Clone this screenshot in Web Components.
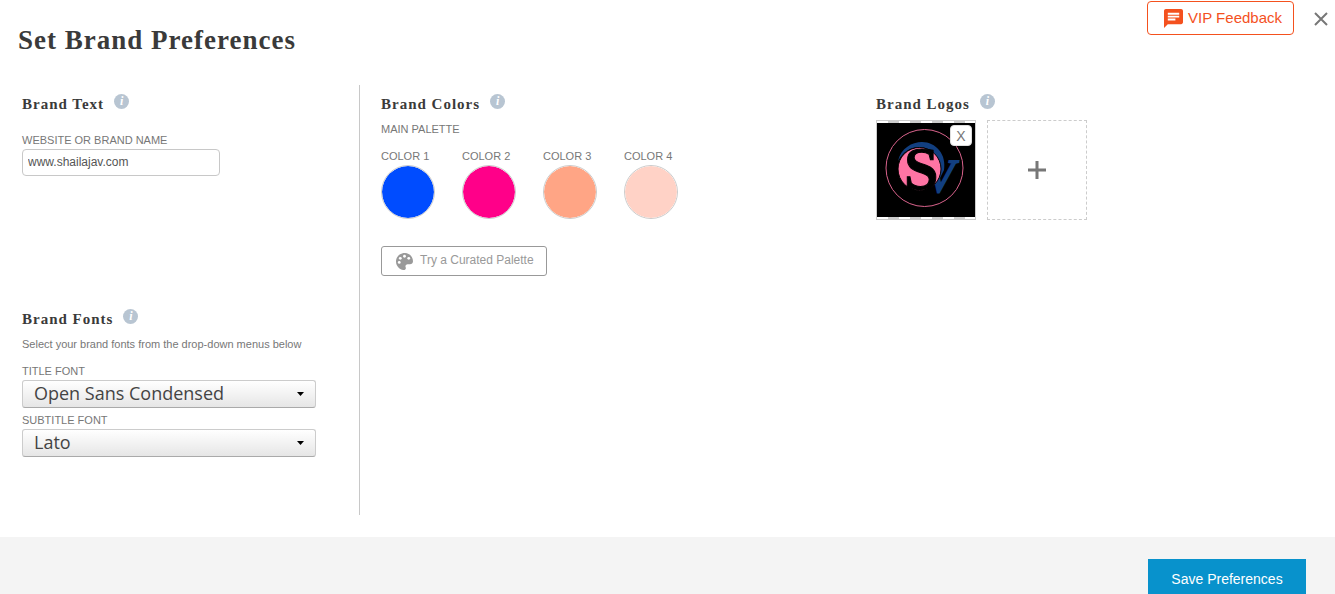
<!DOCTYPE html>
<html lang="en">
<head>
<meta charset="utf-8">
<title>Set Brand Preferences</title>
<style>
  html, body { margin: 0; }
  body { background: #fff; color: #777; font: 11px/14px "Liberation Sans", Arial, sans-serif; }
</style>
</head>
<body>
<brand-preferences>
  <page-header slot="header">Set Brand Preferences</page-header>
  <brand-section slot="side">
    <section-heading slot="heading">Brand Text</section-heading>
    <text-field label="WEBSITE OR BRAND NAME" value="www.shailajav.com"></text-field>
  </brand-section>
  <brand-section slot="side">
    <section-heading slot="heading">Brand Fonts</section-heading>
    <font-picker></font-picker>
  </brand-section>
  <brand-section slot="colors">
    <section-heading slot="heading">Brand Colors</section-heading>
    <color-palette>
      <color-swatch label="COLOR 1" value="#004cff"></color-swatch>
      <color-swatch label="COLOR 2" value="#ff0089"></color-swatch>
      <color-swatch label="COLOR 3" value="#ffa585"></color-swatch>
      <color-swatch label="COLOR 4" value="#ffd2c6"></color-swatch>
    </color-palette>
  </brand-section>
  <brand-section slot="logos">
    <section-heading slot="heading">Brand Logos</section-heading>
    <logo-list></logo-list>
  </brand-section>
  <page-footer slot="footer">Save Preferences</page-footer>
</brand-preferences>

<script>
const define = (name, html, setup) => customElements.define(name, class extends HTMLElement {
  constructor() {
    super();
    this.attachShadow({ mode: 'open' }).innerHTML = '<style>:host,*{box-sizing:border-box}</style>' + html;
  }
  connectedCallback() { if (setup) setup(this, this.shadowRoot); }
});

define('brand-preferences', `
<style>
  :host { display: block; }
  main { display: grid; grid-template-columns: 360px 495fr 480fr; margin-bottom: 22px; }
  .side { padding-left: 22px; border-right: 1px solid #c8c8c8; }
  .colors { padding-left: 21px; }
  .logos { padding-left: 21px; }
</style>
<slot name="header"></slot>
<main>
  <div class="side"><slot name="side"></slot></div>
  <div class="colors"><slot name="colors"></slot></div>
  <div class="logos"><slot name="logos"></slot></div>
</main>
<slot name="footer"></slot>`);

define('page-header', `
<style>
  :host { display: flex; align-items: flex-start; min-height: 85px; padding: 1px 7px 0 18px; }
  h1 { flex: 1; margin: 24px 0 0; color: #3a3a3a; font: bold 27px/30px "Liberation Serif", "Times New Roman", serif; letter-spacing: 1px; }
  button { font: 15px/20px "Liberation Sans", Arial, sans-serif; background: #fff; cursor: pointer; }
  .feedback { display: flex; align-items: center; gap: 5px; height: 34px; padding: 0 11px 0 16px; color: #f4511e; border: 1px solid #f4511e; border-radius: 4px; }
  .close { display: flex; margin: 11px 0 0 20px; padding: 0; border: 0; }
</style>
<h1><slot></slot></h1>
<button class="feedback" type="button">
  <svg width="19" height="19" viewBox="2 2 20 20" fill="currentColor" aria-hidden="true"><path d="M20 2H4c-1.100 0-2 .9-2 2v18l4-4h14c1.100 0 2-.9 2-2V4c0-1.100-.9-2-2-2zM6 6h12v2H6zm0 3h12v2H6zm0 3h8v2H6z"/></svg>
  <span>VIP Feedback</span>
</button>
<button class="close" type="button" aria-label="Close">
  <svg width="14" height="14" viewBox="0 0 14 14" fill="none" stroke="#777" stroke-width="2"><path d="M1 1l12 12M13 1L1 13"/></svg>
</button>`);

define('brand-section', `
<style>:host { display: block; min-height: 215px; padding-top: 9px; }</style>
<slot name="heading"></slot><slot></slot>`);

define('section-heading', `
<style>
  :host { display: flex; align-items: flex-start; gap: 10px; }
  h2 { margin: 0; color: #3a3a3a; font: bold 15px/20px "Liberation Serif", "Times New Roman", serif; letter-spacing: 1px; }
  button { width: 15px; height: 15px; padding: 0; border: 0; border-radius: 50%; background: #b8c5d2; color: #fff; font: italic bold 12px/15px "Liberation Serif", serif; }
</style>
<h2><slot></slot></h2><button type="button" aria-label="More information">i</button>`);

define('text-field', `
<style>
  :host { display: block; padding-top: 19px; }
  label { display: block; margin-bottom: 2px; }
  input { display: block; width: 198px; height: 27px; padding: 0 5px 2px; border: 1px solid #c8c8c8; border-radius: 4px; color: #555; font: 12px "Liberation Sans", Arial, sans-serif; }
</style>
<label for="field"></label><input id="field" type="text">`, (host, root) => {
  root.querySelector('label').textContent = host.getAttribute('label');
  root.querySelector('input').value = host.getAttribute('value');
});

define('font-picker', `
<style>
  :host { display: block; }
  p { margin: 8px 0 13px; }
  label { display: block; margin-bottom: 2px; }
  .box { position: relative; width: 294px; margin-bottom: 5px; }
  select { appearance: none; display: block; width: 100%; height: 28px; padding: 0 30px 1px 11px; border: 1px solid #ccc; border-bottom-color: #aaa; border-radius: 3px; background: linear-gradient(#fff, #e6e6e6); color: #444; font: 18px/25px "Open Sans", sans-serif; }
  svg { position: absolute; right: 12px; top: 12px; pointer-events: none; }
</style>
<p>Select your brand fonts from the drop-down menus below</p>
<label for="title">TITLE FONT</label>
<div class="box"><select id="title"><option>Open Sans Condensed</option><option>Lato</option></select>
<svg width="7" height="4" viewBox="0 0 7 4"><path d="M0 0h7L3.500 4z"/></svg></div>
<label for="subtitle">SUBTITLE FONT</label>
<div class="box"><select id="subtitle"><option>Lato</option><option>Open Sans Condensed</option></select>
<svg width="7" height="4" viewBox="0 0 7 4"><path d="M0 0h7L3.500 4z"/></svg></div>`);

define('color-swatch', `
<style>
  :host { display: block; width: 54px; }
  label { display: block; margin-bottom: 2px; white-space: nowrap; }
  input { appearance: none; display: block; width: 54px; height: 54px; padding: 0; border: 1px solid #ccc; border-radius: 50%; background: none; overflow: hidden; }
  input::-webkit-color-swatch-wrapper { padding: 0; }
  input::-webkit-color-swatch { border: 0; border-radius: 50%; }
</style>
<label for="color"></label><input id="color" type="color">`, (host, root) => {
  root.querySelector('label').textContent = host.getAttribute('label');
  root.querySelector('input').value = host.getAttribute('value');
});

define('color-palette', `
<style>
  :host { display: block; }
  p { margin: 8px 0 13px; }
  .row { display: flex; gap: 27px; margin-bottom: 27px; }
  button { display: flex; align-items: center; gap: 7px; height: 30px; padding: 0 12px 0 14px; border: 1px solid #999; border-radius: 3px; background: #fff; color: #999; font: 12px/14px "Liberation Sans", Arial, sans-serif; }
  span { padding-bottom: 2px; }
</style>
<p>MAIN PALETTE</p>
<div class="row"><slot></slot></div>
<button type="button">
  <svg width="17" height="17" viewBox="0 0 512 512" fill="currentColor" aria-hidden="true"><path d="M204 5C105 24 25 104 5 203c-37 187 131 326 247 308 37-6 56-50 39-84-21-42 10-91 57-91h73c50 0 91-41 91-91C512 88 370-27 204 5z"/><g fill="#fff"><circle cx="98" cy="285" r="42"/><circle cx="130" cy="160" r="42"/><circle cx="256" cy="98" r="42"/><circle cx="384" cy="160" r="42"/></g></svg>
  <span>Try a Curated Palette</span>
</button>`);

define('logo-list', `
<style>
  :host { display: flex; gap: 11px; padding-top: 6px; }
  .tile { position: relative; width: 100px; height: 100px; padding: 2px 0; border: 1px solid #ccc; background: repeating-linear-gradient(90deg, #fff 0 11px, #ccc 11px 22px); }
  .tile svg { display: block; }
  .remove { position: absolute; top: 4px; right: 3px; width: 22px; height: 21px; padding: 0; border: 1px solid #ddd; border-radius: 4px; background: #fff; color: #777; font: 14px/18px "Liberation Sans", Arial, sans-serif; }
  .add { display: grid; place-items: center; width: 100px; height: 100px; padding: 0; border: 1px dashed #ccc; background: #fff; }
</style>
<div class="tile">
  <svg width="98" height="94" viewBox="0 0 98 94" role="img" aria-label="Brand logo">
    <rect width="98" height="94" fill="#000"/>
    <circle cx="47.500" cy="45" r="38.500" fill="none" stroke="#d9638c"/>
    <path fill="#123f80" d="M21 38C24 25 35 19 45 19c7 0 13 3 17 8 5 6 6 13 5 20l-4 8C64 37 55 24 42 24c-9 0-16 5-21 14z"/>
    <text x="49" y="69" fill="#123f80" stroke="#123f80" stroke-width="2" font-family="Liberation Serif, serif" font-style="italic" font-size="46">V</text>
    <circle cx="42.500" cy="46" r="21.500" fill="#ff74a4" stroke="#000"/>
    <text x="27" y="66" fill="#000" stroke="#000" font-family="Liberation Serif, serif" font-weight="bold" font-size="62">S</text>
  </svg>
  <button class="remove" type="button" aria-label="Remove logo">X</button>
</div>
<button class="add" type="button" aria-label="Add logo">
  <svg width="18" height="18" viewBox="0 0 18 18" fill="none" stroke="#777" stroke-width="3"><path d="M9 0v18M0 9h18"/></svg>
</button>`);

define('page-footer', `
<style>
  :host { display: flex; justify-content: flex-end; padding: 22px 29px 22px 0; background: #f4f4f4; }
  button { width: 158px; height: 40px; padding: 0; border: 0; background: #0892cc; color: #fff; font: 14px/20px "Liberation Sans", Arial, sans-serif; }
</style>
<button type="submit"><slot></slot></button>`);
</script>
</body>
</html>
